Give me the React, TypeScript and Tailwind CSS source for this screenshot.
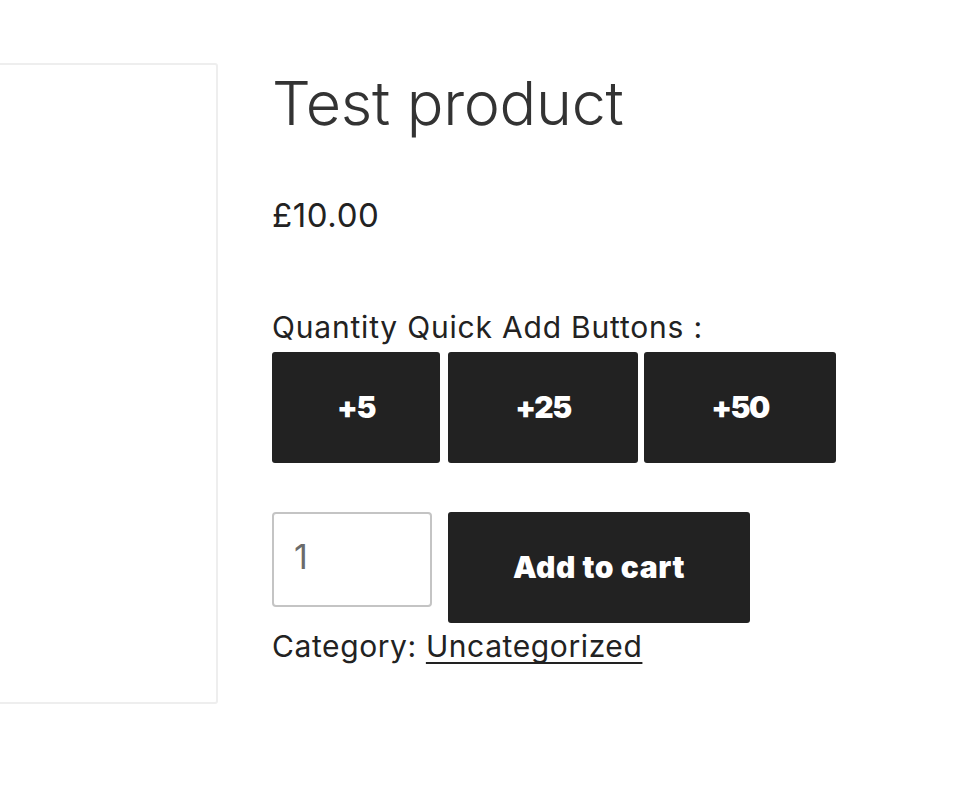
import React from "react";

export default function App() {
  return (
    <div
      className="w-[966px] h-[790px] bg-white flex items-start pt-[63px] overflow-hidden"
      style={{ fontFamily: "Inter, 'Liberation Sans', sans-serif" }}
    >
      <div className="ml-[-20px] w-[238px] h-[641px] border-2 border-[#eeeeee] rounded-[3px] shrink-0" />
      <div className="ml-[54px] flex flex-col">
        <h1 className="text-[61px] leading-[80px] font-light text-[#333] tracking-[-0.3px]">Test product</h1>
        <div className="mt-[54px] text-[33px] leading-[36px] text-[#222] tracking-[0.6px]">£10.00</div>
        <div className="mt-[76px] text-[30px] leading-[36px] text-[#222] tracking-[0.8px]">Quantity Quick Add Buttons :</div>
        <div className="mt-[7px] flex">
          <button className="w-[168px] h-[111px] bg-[#222] rounded-[3px] text-white text-[30px] font-black tracking-[-1.5px]">+5</button>
          <button className="ml-[8px] w-[190px] h-[111px] bg-[#222] rounded-[3px] text-white text-[30px] font-black tracking-[-1.5px]">+25</button>
          <button className="ml-[6px] w-[192px] h-[111px] bg-[#222] rounded-[3px] text-white text-[30px] font-black tracking-[-1.5px]">+50</button>
        </div>
        <div className="mt-[49px] flex items-start">
          <div className="w-[160px] h-[95px] border-2 border-[#c4c4c4] rounded-[4px] pl-[20px] pt-[25px] text-[34px] leading-[36px] text-[#6b6b6b]">1</div>
          <button className="ml-[16px] w-[302px] h-[111px] bg-[#222] rounded-[3px] text-white text-[30px] font-black tracking-[0.6px]">Add to cart</button>
        </div>
        <div className="mt-[3px] text-[30px] leading-[40px] text-[#222] tracking-[0.6px]">
          Category:{" "}
          <span className="underline decoration-2 underline-offset-[5px] [text-decoration-skip-ink:none]">Uncategorized</span>
        </div>
      </div>
    </div>
  );
}
